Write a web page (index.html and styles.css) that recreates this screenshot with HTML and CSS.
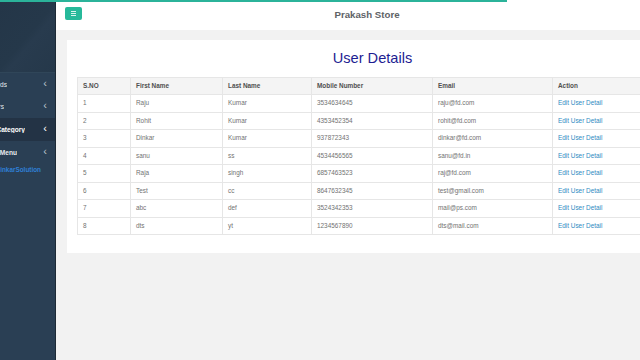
FILE: index.html
```html
<!DOCTYPE html>
<html>
<head>
<meta charset="utf-8">
<title>Prakash Store</title>
<link rel="stylesheet" href="styles.css">
</head>
<body>
<div class="progress"></div>
<div class="app">
  <aside class="sidebar">
    <div class="side-top"></div>
    <ul class="menu">
      <li class="item"><span class="lbl w1"><span>Dashboards</span></span><span class="chev">&#8249;</span></li>
      <li class="item"><span class="lbl w2"><span>Users</span></span><span class="chev">&#8249;</span></li>
      <li class="item active"><span class="lbl w3"><span>Product Category</span></span><span class="chev">&#8249;</span></li>
      <li class="item bold"><span class="lbl w4"><span>Multilevel Menu</span></span><span class="chev">&#8249;</span></li>
    </ul>
    <div class="brandlink"><span class="lbl w5"><span>DinkarSolution</span></span></div>
  </aside>
  <main class="main">
    <header class="topbar">
      <div class="tb-left">
        <button class="toggle" type="button" aria-label="menu">
          <span class="bar"></span><span class="bar"></span><span class="bar"></span>
        </button>
      </div>
      <div class="store">Prakash Store</div>
      <div></div>
    </header>
    <section class="content">
      <div class="panel">
        <h1 class="title">User Details</h1>
        <table class="grid">
          <colgroup>
            <col class="c1"><col class="c2"><col class="c3"><col class="c4"><col class="c5"><col class="c6">
          </colgroup>
          <thead>
            <tr><th>S.NO</th><th>First Name</th><th>Last Name</th><th>Mobile Number</th><th>Email</th><th>Action</th></tr>
          </thead>
          <tbody>
            <tr><td>1</td><td>Raju</td><td>Kumar</td><td>3534634645</td><td>raju@fd.com</td><td><a href="#">Edit User Detail</a></td></tr>
            <tr><td>2</td><td>Rohit</td><td>Kumar</td><td>4353452354</td><td>rohit@fd.com</td><td><a href="#">Edit User Detail</a></td></tr>
            <tr><td>3</td><td>Dinkar</td><td>Kumar</td><td>937872343</td><td>dinkar@fd.com</td><td><a href="#">Edit User Detail</a></td></tr>
            <tr><td>4</td><td>sanu</td><td>ss</td><td>4534456565</td><td>sanu@fd.in</td><td><a href="#">Edit User Detail</a></td></tr>
            <tr><td>5</td><td>Raja</td><td>singh</td><td>6857463523</td><td>raj@fd.com</td><td><a href="#">Edit User Detail</a></td></tr>
            <tr><td>6</td><td>Test</td><td>cc</td><td>8647632345</td><td>test@gmail.com</td><td><a href="#">Edit User Detail</a></td></tr>
            <tr><td>7</td><td>abc</td><td>def</td><td>3524342353</td><td>mail@ps.com</td><td><a href="#">Edit User Detail</a></td></tr>
            <tr><td>8</td><td>dts</td><td>yt</td><td>1234567890</td><td>dts@mail.com</td><td><a href="#">Edit User Detail</a></td></tr>
          </tbody>
        </table>
      </div>
    </section>
  </main>
</div>
</body>
</html>
```
FILE: styles.css
```css
html, body {
  margin: 0;
  padding: 0;
  width: 640px;
  height: 360px;
  overflow: hidden;
  font-family: "Liberation Sans", Arial, sans-serif;
}

.progress {
  position: absolute;
  top: 0;
  left: 0;
  width: 507px;
  height: 2px;
  background: #2bb39a;
  z-index: 5;
}

.app {
  display: flex;
  width: 677px;
  height: 360px;
}

.sidebar {
  width: 55px;
  flex: none;
  background: #2a3f54;
  border-right: 1px solid #1d2a36;
  overflow: hidden;
}

.side-top {
  height: 72px;
  background: linear-gradient(130deg, #243648 0%, #25384a 50%, #283b4e 58%, #25384a 100%);
  border-bottom: 1px solid #304659;
}

.menu {
  list-style: none;
  margin: 0;
  padding: 0;
}

.item {
  display: flex;
  align-items: center;
  height: 23px;
  font-size: 6.6px;
  color: #e6e9ec;
}

.item:first-child {
  height: 22px;
}

.item.active {
  background: #233345;
  color: #ffffff;
  font-weight: bold;
}

.item.bold {
  font-weight: bold;
  color: #e8ebee;
}

.lbl {
  display: flex;
  justify-content: flex-end;
  overflow: hidden;
  white-space: nowrap;
  flex: none;
}

.w1 { width: 7px; }
.w2 { width: 4px; }
.w3 { width: 25px; }
.w4 { width: 17px; }
.w5 { width: 41px; }

.chev {
  margin-left: auto;
  margin-right: 8px;
  font-size: 11px;
  line-height: 11px;
  margin-top: -2px;
  color: #b7c0ca;
  font-weight: normal;
}

.item.active .chev {
  color: #ffffff;
}

.brandlink {
  height: 10px;
  display: flex;
  align-items: center;
  font-size: 6.4px;
  font-weight: bold;
  color: #2f7fd6;
}

.main {
  flex: 1;
  background: #f2f2f2;
  display: flex;
  flex-direction: column;
}

.topbar {
  height: 30px;
  background: #ffffff;
  display: grid;
  grid-template-columns: 1fr auto 1fr;
  align-items: center;
}

.tb-left {
  padding-left: 9px;
  display: flex;
  align-items: center;
}

.toggle {
  width: 17px;
  height: 13px;
  margin-top: -3px;
  border: none;
  border-radius: 2px;
  background: #26b99a;
  padding: 0;
  display: flex;
  flex-direction: column;
  align-items: center;
  justify-content: center;
  gap: 1px;
}

.bar {
  width: 5px;
  height: 1px;
  background: #d6f2ec;
}

.store {
  font-size: 9.7px;
  font-weight: bold;
  color: #5e6266;
  margin-top: -2px;
}

.content {
  padding: 10px 0 0 11px;
}

.panel {
  background: #ffffff;
  padding: 10px 10px 18px 10px;
}

.title {
  margin: 0 0 11px 0;
  text-align: center;
  font-size: 14.6px;
  line-height: 16px;
  font-weight: normal;
  color: #1d1d92;
}

.grid {
  width: 590px;
  border-collapse: collapse;
  table-layout: fixed;
  font-size: 6.4px;
}

.c1 { width: 53px; }
.c2 { width: 92px; }
.c3 { width: 89px; }
.c4 { width: 121px; }
.c5 { width: 120px; }
.c6 { width: 115px; }

.grid th,
.grid td {
  text-align: left;
  padding: 4px 5px;
  line-height: 8.5px;
  border: 1px solid #e6e6e6;
  white-space: nowrap;
}

.grid th {
  background: #f4f4f4;
  color: #4f4f4f;
  font-weight: bold;
  line-height: 8px;
}

.grid td {
  color: #727272;
}

.grid a {
  color: #2e8ac2;
  text-decoration: none;
}
```
